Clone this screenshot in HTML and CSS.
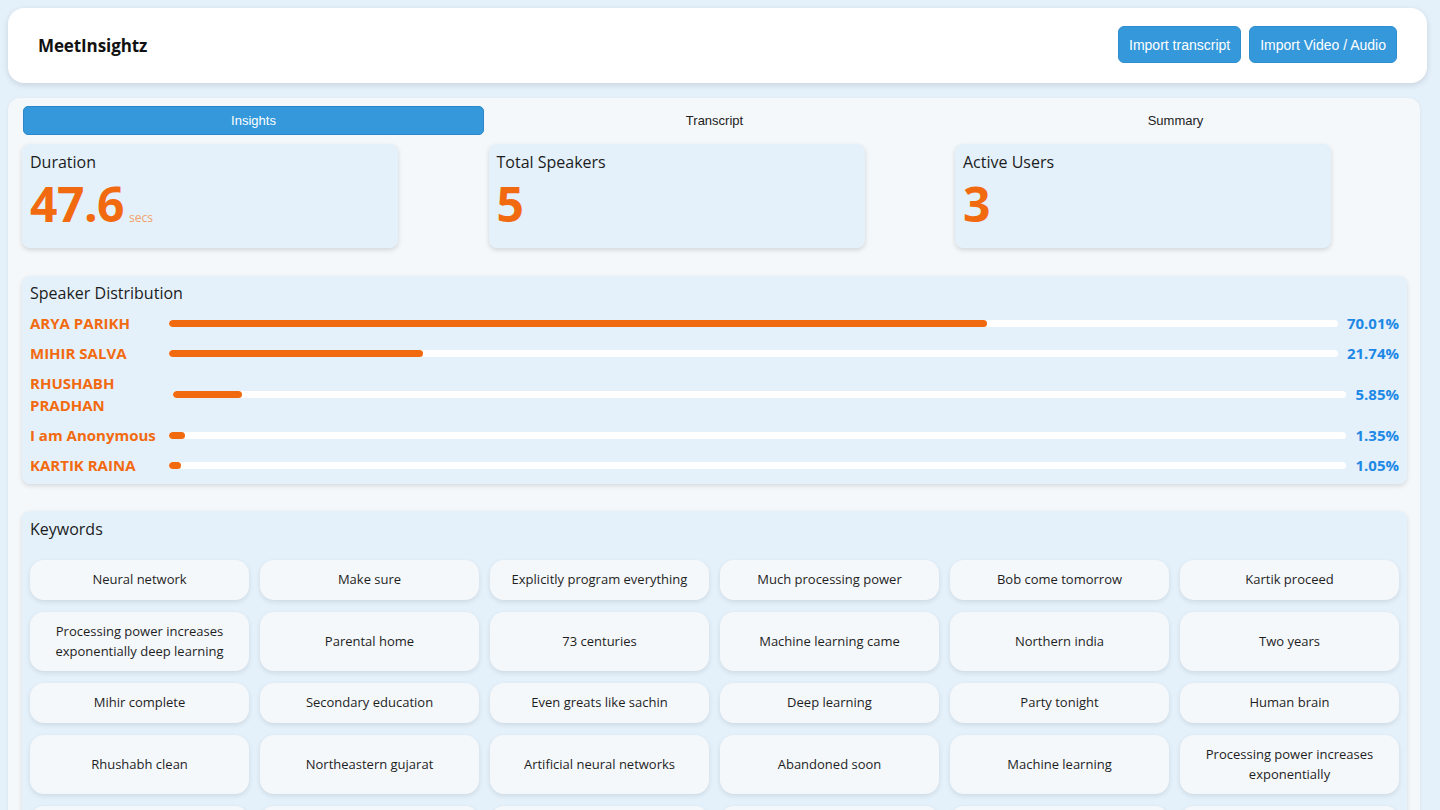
FILE: index.html
```html
<!DOCTYPE html>
<html lang="en">
<head>
<meta charset="utf-8">
<title>MeetInsightz</title>
<link rel="stylesheet" href="styles.css">
</head>
<body>
<header class="topbar">
  <div class="brand">MeetInsightz</div>
  <div class="actions">
    <button class="btn">Import transcript</button>
    <button class="btn">Import Video / Audio</button>
  </div>
</header>

<main class="panel">
  <nav class="tabs">
    <div class="tab active">Insights</div>
    <div class="tab">Transcript</div>
    <div class="tab">Summary</div>
  </nav>

  <section class="stats">
    <div class="stat">
      <div class="stat-label">Duration</div>
      <div class="stat-value">47.6<span class="unit">secs</span></div>
    </div>
    <div class="stat">
      <div class="stat-label">Total Speakers</div>
      <div class="stat-value">5</div>
    </div>
    <div class="stat">
      <div class="stat-label">Active Users</div>
      <div class="stat-value">3</div>
    </div>
  </section>

  <section class="card dist">
    <div class="card-title">Speaker Distribution</div>
    <div class="row">
      <div class="name">ARYA PARIKH</div>
      <div class="track"><div class="fill" style="width:70.01%"></div></div>
      <div class="pct">70.01%</div>
    </div>
    <div class="row">
      <div class="name">MIHIR SALVA</div>
      <div class="track"><div class="fill" style="width:21.74%"></div></div>
      <div class="pct">21.74%</div>
    </div>
    <div class="row">
      <div class="name wide">RHUSHABH PRADHAN</div>
      <div class="track"><div class="fill" style="width:5.85%"></div></div>
      <div class="pct">5.85%</div>
    </div>
    <div class="row">
      <div class="name">I am Anonymous</div>
      <div class="track"><div class="fill" style="width:1.35%"></div></div>
      <div class="pct">1.35%</div>
    </div>
    <div class="row">
      <div class="name">KARTIK RAINA</div>
      <div class="track"><div class="fill" style="width:1.05%"></div></div>
      <div class="pct">1.05%</div>
    </div>
  </section>

  <section class="card keywords">
    <div class="card-title">Keywords</div>
    <div class="chips">
      <div class="chip">Neural network</div>
      <div class="chip">Make sure</div>
      <div class="chip">Explicitly program everything</div>
      <div class="chip">Much processing power</div>
      <div class="chip">Bob come tomorrow</div>
      <div class="chip">Kartik proceed</div>
      <div class="chip">Processing power increases exponentially deep learning</div>
      <div class="chip">Parental home</div>
      <div class="chip">73 centuries</div>
      <div class="chip">Machine learning came</div>
      <div class="chip">Northern india</div>
      <div class="chip">Two years</div>
      <div class="chip">Mihir complete</div>
      <div class="chip">Secondary education</div>
      <div class="chip">Even greats like sachin</div>
      <div class="chip">Deep learning</div>
      <div class="chip">Party tonight</div>
      <div class="chip">Human brain</div>
      <div class="chip">Rhushabh clean</div>
      <div class="chip">Northeastern gujarat</div>
      <div class="chip">Artificial neural networks</div>
      <div class="chip">Abandoned soon</div>
      <div class="chip">Machine learning</div>
      <div class="chip">Processing power increases exponentially</div>
      <div class="chip">Computer science</div>
      <div class="chip">Final year</div>
      <div class="chip">Data science</div>
      <div class="chip">Next meeting</div>
      <div class="chip">Good morning</div>
      <div class="chip">Learning algorithms</div>
    </div>
  </section>
</main>
</body>
</html>
```
FILE: styles.css
```css
* { box-sizing: border-box; }

html, body { height: 100%; }

body {
  margin: 0;
  padding: 8px 13px 8px 8px;
  background: #e4f0fa;
  font-family: "Open Sans", "Noto Sans", sans-serif;
  color: #1f1f1f;
  overflow: hidden;
}

.topbar {
  height: 75px;
  background: #ffffff;
  border-radius: 16px;
  box-shadow: 0 2px 6px rgba(0, 0, 0, 0.12);
  display: flex;
  align-items: center;
  justify-content: space-between;
  padding: 0 30px;
}

.brand {
  font-weight: 700;
  font-size: 17px;
  color: #111;
  letter-spacing: -0.1px;
}

.actions { display: flex; gap: 8px; margin-top: -2px; }

.btn {
  font-family: "Liberation Sans", Arial, sans-serif;
  font-size: 14px;
  color: #fff;
  background: #3498db;
  border: 1px solid #2f8ed0;
  border-radius: 6px;
  height: 37px;
  padding: 0 10px;
  cursor: pointer;
}

.panel {
  margin-top: 15px;
  margin-right: 7px;
  background: #f5f8fb;
  border-radius: 12px;
  padding: 8px 13px 20px 14px;
  box-shadow: 0 1px 4px rgba(0, 0, 0, 0.06);
}

.tabs {
  display: grid;
  grid-template-columns: repeat(3, 1fr);
  padding: 0 1px;
}

.tab {
  height: 29px;
  display: flex;
  align-items: center;
  justify-content: center;
  font-family: "Liberation Sans", Arial, sans-serif;
  font-size: 13px;
  color: #222;
  border-radius: 5px;
}

.tab.active {
  background: #3498db;
  color: #fff;
  border: 1px solid #2a86c8;
}

.stats {
  display: grid;
  grid-template-columns: repeat(3, 376px);
  column-gap: 90.5px;
  margin-top: 9px;
}

.stat {
  height: 104px;
  background: #e4f1fb;
  border-radius: 8px;
  box-shadow: 0 2px 5px rgba(0, 0, 0, 0.14);
  padding: 6px 8px;
}

.stat-label {
  font-size: 16px;
  line-height: 24px;
  color: #1c1c1c;
}

.stat-value {
  font-size: 48px;
  font-weight: 700;
  line-height: 60px;
  color: #f26a10;
  letter-spacing: -0.5px;
}

.unit {
  font-size: 12px;
  font-weight: 400;
  color: #f3a06a;
  margin-left: 5px;
  letter-spacing: 0;
}

.card {
  background: #e4f1fb;
  border-radius: 8px;
  box-shadow: 0 2px 5px rgba(0, 0, 0, 0.12);
}

.card-title {
  font-size: 16px;
  line-height: 24px;
  color: #1c1c1c;
}

.dist {
  margin-top: 28px;
  padding: 5px 8px 4px 8px;
}

.dist .card-title { margin-bottom: 3px; }

.row {
  display: flex;
  align-items: center;
  gap: 9px;
  padding: 4px 0;
}

.name {
  width: 130px;
  flex-shrink: 0;
  font-size: 15px;
  font-weight: 700;
  line-height: 22px;
  color: #f26a10;
  white-space: nowrap;
}

.name.wide { white-space: normal; width: 134px; }

.track {
  flex: 1;
  height: 7px;
  background: #ffffff;
  border-radius: 4px;
  overflow: hidden;
}

.fill {
  height: 100%;
  min-width: 12px;
  background: #f26a10;
  border-radius: 4px;
}

.pct {
  font-size: 15px;
  font-weight: 700;
  color: #1e88e5;
  line-height: 22px;
}

.keywords {
  margin-top: 27px;
  padding: 6px 8px 14px 8px;
}

.keywords .card-title { margin-bottom: 19px; }

.chips {
  display: grid;
  grid-template-columns: repeat(6, 1fr);
  gap: 12px 11px;
}

.chip {
  min-height: 40px;
  background: #f5f8fb;
  border-radius: 14px;
  box-shadow: 0 2px 5px rgba(0, 0, 0, 0.1);
  padding: 10px 16px;
  display: flex;
  align-items: center;
  justify-content: center;
  text-align: center;
  font-size: 13px;
  line-height: 19.5px;
  color: #1e1e1e;
}
```
